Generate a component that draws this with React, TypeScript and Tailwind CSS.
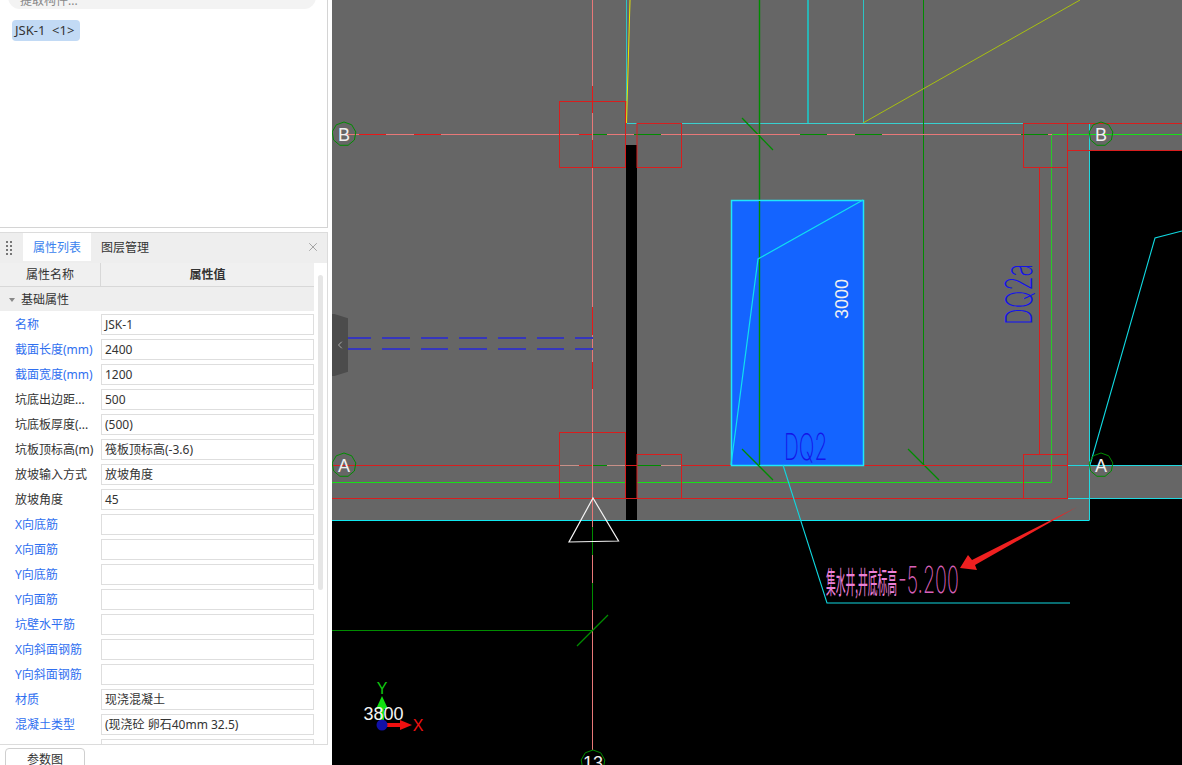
import { X, ChevronLeft } from "lucide-react";

const rows = [
  { name: "名称", value: "JSK-1", blue: true },
  { name: "截面长度(mm)", value: "2400", blue: true },
  { name: "截面宽度(mm)", value: "1200", blue: true },
  { name: "坑底出边距...", value: "500" },
  { name: "坑底板厚度(...", value: "(500)" },
  { name: "坑板顶标高(m)", value: "筏板顶标高(-3.6)" },
  { name: "放坡输入方式", value: "放坡角度" },
  { name: "放坡角度", value: "45" },
  { name: "X向底筋", value: "", blue: true },
  { name: "X向面筋", value: "", blue: true },
  { name: "Y向底筋", value: "", blue: true },
  { name: "Y向面筋", value: "", blue: true },
  { name: "坑壁水平筋", value: "", blue: true },
  { name: "X向斜面钢筋", value: "", blue: true },
  { name: "Y向斜面钢筋", value: "", blue: true },
  { name: "材质", value: "现浇混凝土", blue: true },
  { name: "混凝土类型", value: "(现浇砼 卵石40mm 32.5)", blue: true },
  { name: "", value: "" },
];

const RED = "#d81e1e";
const CYAN = "#20d8e0";
const SALMON = "#e87878";
const DARK_GREEN = "#008c00";
const GREEN = "#18e018";

// [x1, y1, x2, y2, colour, width]
const lines: [number, number, number, number, string, number][] = [
  // upper wall lines
  [626.5, 0, 626.5, 123, "#2cc4c4", 1],
  [808, 0, 808, 123, "#2ab4b4", 2],
  [863.5, 0, 863.5, 123, "#2cc4c4", 1],
  [627, 123.5, 1023, 123.5, "#38d0d0", 1],
  [1067, 123.5, 1089, 123.5, "#38d0d0", 1],
  [1089.5, 123, 1089.5, 520, CYAN, 1],
  [332, 520.5, 1089.5, 520.5, "#10e8f0", 1],
  // green column axes
  [759.5, 0, 759.5, 465, DARK_GREEN, 1.4],
  [923.5, 0, 923.5, 465, DARK_GREEN, 1],
  [742, 118, 773, 150, DARK_GREEN, 1.3],
  [908, 449, 939, 480, DARK_GREEN, 1.3],
  // red outlines
  [332, 465.5, 1067, 465.5, RED, 1],
  [332, 498.5, 1067, 498.5, RED, 1],
  [1067, 123.5, 1182, 123.5, RED, 1],
  [1067, 150.5, 1182, 150.5, RED, 1],
  [1039.5, 167, 1039.5, 455, RED, 1],
  [1067.5, 167, 1067.5, 498, RED, 1],
  [626, 101, 626, 123, RED, 1],
  // bright green inner line
  [332, 482.5, 626, 482.5, GREEN, 1],
  [637, 482.5, 1051.5, 482.5, GREEN, 1],
  [1051.5, 134, 1051.5, 482, "#28c828", 1],
  [1052, 134.5, 1182, 134.5, GREEN, 1],
  // cyan at the right edge
  [1067, 465.5, 1182, 465.5, CYAN, 1],
  [1067, 498.5, 1182, 498.5, CYAN, 1],
  // axis B
  [344, 134.5, 1023, 134.5, SALMON, 1],
  [359, 134.5, 386, 134.5, "#e81818", 1],
  [414, 134.5, 441, 134.5, "#e81818", 1],
  [579, 134.5, 593, 134.5, "#e81818", 1],
  [593, 134.5, 607, 134.5, DARK_GREEN, 1],
  [634, 134.5, 661, 134.5, DARK_GREEN, 1],
  [800, 134.5, 827, 134.5, DARK_GREEN, 1],
  [855, 134.5, 882, 134.5, DARK_GREEN, 1],
  [1021, 134.5, 1048, 134.5, DARK_GREEN, 1],
  [1048, 134.5, 1052, 134.5, SALMON, 1],
  // axis A, the dashes over the red line
  [560, 465.5, 579, 465.5, "#c89088", 1],
  [593, 465.5, 607, 465.5, DARK_GREEN, 1],
  [607, 465.5, 626, 465.5, "#c89088", 1],
  [637, 465.5, 661, 465.5, DARK_GREEN, 1],
  [661, 465.5, 681, 465.5, "#c89088", 1],
  // axis 13
  [592.5, 0, 592.5, 750, SALMON, 1],
  [592.5, 86, 592.5, 113, "#e81818", 1],
  [592.5, 140, 592.5, 168, "#e81818", 1],
  [592.5, 307, 592.5, 335, "#e81818", 1],
  [592.5, 362, 592.5, 389, "#e81818", 1],
  [592.5, 527, 592.5, 555, DARK_GREEN, 1],
  [592.5, 583, 592.5, 610, DARK_GREEN, 1],
  // lower left dark green
  [332, 630.5, 592, 630.5, DARK_GREEN, 1],
  [577, 646, 608, 615, DARK_GREEN, 1.3],
  // blue dashed pair
  ...[
    [348, 371],
    [382, 410],
    [421, 448],
    [459, 487],
    [498, 526],
    [537, 564],
    [575, 593],
  ].flatMap(([a, b]): [number, number, number, number, string, number][] => [
    [a, 338, b, 338, "#3636bc", 2],
    [a, 349, b, 349, "#3636bc", 2],
  ]),
];

const boxes = [
  [559.5, 101.5, 66, 66],
  [637, 123.5, 44.5, 44],
  [1023.5, 123.5, 44, 44],
  [559.5, 432.5, 66, 66],
  [637, 454.5, 44.5, 44],
  [1023.5, 454.5, 44, 44],
];

const bubbles = [
  { x: 344, y: 134, label: "B" },
  { x: 344, y: 465, label: "A" },
  { x: 1101, y: 134, label: "B" },
  { x: 1101, y: 465, label: "A" },
  { x: 593, y: 762, label: "13" },
];

function octagon(x: number, y: number, r: number) {
  const pts: string[] = [];
  for (let i = 0; i < 9; i++) {
    const a = (Math.PI * 2 * i) / 9 - Math.PI / 2;
    pts.push(`${x + r * Math.cos(a)},${y + r * Math.sin(a)}`);
  }
  return pts.join(" ");
}

function Drawing() {
  return (
    <svg
      width="850"
      height="765"
      viewBox="332 0 850 765"
      className="block font-['Liberation_Sans',sans-serif]"
    >
      <rect x="332" y="0" width="850" height="765" fill="#000" />
      {/* gray slab */}
      <rect x="332" y="0" width="757" height="520" fill="#666" />
      <rect x="1089" y="0" width="93" height="151" fill="#666" />
      <rect x="1089" y="465" width="93" height="33" fill="#666" />
      <rect x="626" y="145" width="11" height="375" fill="#000" />

      {lines.map(([x1, y1, x2, y2, c, w], i) => (
        <line key={i} x1={x1} y1={y1} x2={x2} y2={y2} stroke={c} strokeWidth={w} />
      ))}

      {boxes.map(([x, y, w, h], i) => (
        <rect key={i} x={x} y={y} width={w} height={h} fill="none" stroke={RED} />
      ))}

      {/* slanted lines above */}
      <line x1="626.5" y1="123" x2="630" y2="0" stroke="#e8e800" />
      <line x1="863" y1="123" x2="1080" y2="0" stroke="#a8c010" />

      {/* the pit */}
      <rect x="731.5" y="200.5" width="132" height="265" fill="#1464ff" stroke="#20e8f8" strokeWidth="1.5" />
      <line x1="759.5" y1="201" x2="759.5" y2="465" stroke={DARK_GREEN} strokeWidth="1.4" />
      <line x1="742" y1="449" x2="773" y2="480" stroke={DARK_GREEN} strokeWidth="1.3" />
      <polyline points="863,200 758,259 731,465" fill="none" stroke="#10e0f0" strokeWidth="1.2" />
      <text x="842" y="319" fontSize="18" fill="#f0f0f0" transform="rotate(-90 842 319) translate(0 6)">
        3000
      </text>
      <text
        transform="translate(784 460) scale(0.56 1)"
        fontSize="37"
        fill="#1414e8"
        className="font-['Inter',sans-serif] font-extralight"
      >
        DQ2
      </text>
      <text
        transform="translate(1032 325) rotate(-90) scale(0.63 1)"
        fontSize="37"
        fill="#1414e8"
        className="font-['Inter',sans-serif] font-extralight"
      >
        DQ2a
      </text>

      {/* leader and note */}
      <polyline points="783,465 827,603 1070,603" fill="none" stroke="#10d8e0" strokeWidth="1.1" />
      <polyline points="1090,465 1155,238 1182,231" fill="none" stroke="#10d8e0" strokeWidth="1.1" />
      <text
        transform="translate(826 593) scale(0.326 1)"
        fontSize="30"
        fill="#ec80d8"
        className="font-['Noto_Sans_CJK_SC',sans-serif]"
      >
        集水井,井底标高
      </text>
      <text
        transform="translate(898 593) scale(0.53 1)"
        fontSize="37"
        fill="#d860b8"
        className="font-['Inter',sans-serif] font-extralight"
      >
        -5.200
      </text>
      <polygon points="1077,507 972,560 968,555 960,568 977,570 975,565" fill="#f02020" />

      {/* section mark */}
      <polygon points="593,498 618.5,541 569,542" fill="none" stroke="#f4f4f4" strokeWidth="1.2" />

      {/* grid bubbles */}
      {bubbles.map((b) => (
        <g key={b.x + "-" + b.y}>
          <polygon points={octagon(b.x, b.y, 12)} fill="none" stroke={DARK_GREEN} />
          <text x={b.x} y={b.y + 6.5} fontSize="18" fill="#f0f0f0" textAnchor="middle">
            {b.label}
          </text>
        </g>
      ))}

      {/* UCS */}
      <rect x="380" y="708" width="4" height="14" fill="#10e010" />
      <polygon points="382,696 376,709 388,709" fill="#10e010" />
      <rect x="386" y="723" width="16" height="4" fill="#f01010" />
      <polygon points="412,725 400,720 400,730" fill="#f01010" />
      <text x="382" y="694" fontSize="16" fill="#10c810" textAnchor="middle">Y</text>
      <text x="418" y="731" fontSize="16" fill="#f01010" textAnchor="middle">X</text>
      <text x="383.5" y="720" fontSize="18" fill="#f4f4f4" textAnchor="middle">3800</text>
      <circle cx="382" cy="725" r="5.5" fill="#1010a8" />
    </svg>
  );
}

export default function App() {
  return (
    <div className="flex h-[765px] w-[1182px] overflow-hidden bg-white font-['Noto_Sans','Noto_Sans_CJK_SC',sans-serif] text-xs text-[#333]">
      <aside className="flex w-[332px] shrink-0 flex-col bg-white">
        {/* top panel */}
        <div className="h-[228px] w-[328px] shrink-0 overflow-hidden border-r border-b border-[#d4d4d4]">
          <div className="mx-2 -mt-3 flex h-[21px] w-[308px] items-end justify-between rounded-b-xl bg-[#f3f3f3] px-3 pb-[3px] text-[#888]">
            <span className="leading-[10px]">提取构件...</span>
          </div>
          <div className="mt-[11px] ml-3 flex h-[21px] w-[68px] items-center whitespace-pre rounded bg-[#c2daf5] px-[3px] text-[13px] text-[#333]">
            {"JSK-1  <1>"}
          </div>
        </div>

        {/* property panel */}
        <div className="mt-1 flex h-[513px] w-[328px] shrink-0 flex-col overflow-hidden border-t border-r border-b border-[#dcdcdc]">
          <div className="flex h-[30px] shrink-0 items-stretch bg-[#eeeeee]">
            <div className="grid w-[23px] grid-cols-2 content-center justify-center gap-x-[2px] gap-y-[2px] pl-[6px] pr-[11px]">
              {[0, 1, 2, 3, 4, 5, 6, 7].map((i) => (
                <span key={i} className="h-[2px] w-[2px] bg-[#777]" />
              ))}
            </div>
            <div className="flex h-[28px] w-[68px] items-center justify-center bg-white pt-px text-[#3a82ee]">属性列表</div>
            <div className="flex h-[28px] w-[68px] items-center justify-center pt-px text-[#333]">图层管理</div>
            <div className="ml-auto flex h-[28px] w-[29px] items-center justify-center text-[#999]">
              <X size={14} strokeWidth={1.5} />
            </div>
          </div>

          <div className="flex min-h-0 flex-1">
            <div className="w-[314px] shrink-0">
              <div className="flex h-[24px] border-b border-[#d8d8d8] bg-[#f0f0f0]">
                <div className="flex w-[101px] items-center justify-center border-r border-[#d8d8d8] pt-px">属性名称</div>
                <div className="flex flex-1 items-center justify-center pt-px font-semibold">属性值</div>
              </div>
              <div className="flex h-[24px] items-center gap-[6px] bg-[#eeeeee] pt-px pl-[9px]">
                <span className="h-0 w-0 border-x-[3px] border-t-[4px] border-x-transparent border-t-[#888]" />
                基础属性
              </div>
              <div className="mt-px flex flex-col">
                {rows.map((r, i) => (
                  <div key={i} className="flex h-[25px] items-center">
                    <div
                      className={
                        r.blue
                          ? "w-[101px] shrink-0 truncate pl-[15px] text-[#2f6ff0]"
                          : "w-[101px] shrink-0 whitespace-nowrap pl-[15px] text-[#333]"
                      }
                    >
                      {r.name}
                    </div>
                    <div className="flex h-[21px] flex-1 items-center border border-[#dedede] bg-white px-[3px] whitespace-nowrap">
                      {r.value}
                    </div>
                  </div>
                ))}
              </div>
            </div>
            <div className="ml-[4px] mt-[12px] h-[315px] w-[5px] rounded-sm bg-[#e6e6e6]" />
          </div>
        </div>

        <div className="ml-[5px] mt-[3px] flex h-[24px] w-[80px] shrink-0 items-center justify-center rounded-t border border-[#cfcfcf] bg-white">
          参数图
        </div>
      </aside>

      <main className="relative flex-1">
        <Drawing />
        <button className="absolute top-[314px] left-0 flex h-[62px] w-[16px] items-center justify-center rounded-r-sm bg-[#4c4c4c] [clip-path:polygon(0_0,15%_0,100%_7%,100%_93%,15%_100%,0_100%)]">
          <ChevronLeft size={12} className="text-[#aaa]" />
        </button>
      </main>
    </div>
  );
}
